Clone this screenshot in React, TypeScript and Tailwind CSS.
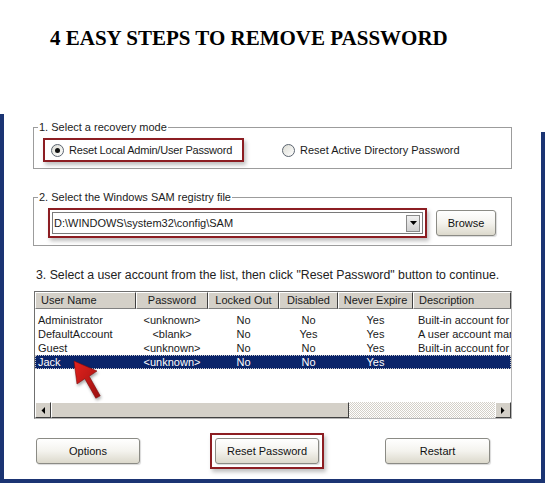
const font = { fontFamily: '"Liberation Sans", Arial, sans-serif' };

const rows = [
  { name: "Administrator", pass: "<unknown>", locked: "No", disabled: "No", never: "Yes", desc: "Built-in account for" },
  { name: "DefaultAccount", pass: "<blank>", locked: "No", disabled: "Yes", never: "Yes", desc: "A user account mar" },
  { name: "Guest", pass: "<unknown>", locked: "No", disabled: "No", never: "Yes", desc: "Built-in account for" },
  { name: "Jack", pass: "<unknown>", locked: "No", disabled: "No", never: "Yes", desc: "" },
];

function Radio({ checked }: { checked?: boolean }) {
  return (
    <span className="w-[13px] h-[13px] rounded-full border border-[#5b6470] bg-gradient-to-br from-[#dcdcd4] to-white flex items-center justify-center shrink-0">
      {checked && <span className="w-[5px] h-[5px] rounded-full bg-[#111]" />}
    </span>
  );
}

function XpButton({ label, className }: { label: string; className: string }) {
  return (
    <button className={"h-[26px] rounded-[3px] border border-[#8b8b85] bg-gradient-to-b from-white via-[#f4f3ee] to-[#dcd9cc] text-[11px] text-[#111] shadow-[1px_1px_1px_rgba(0,0,0,0.15)] " + className}>
      {label}
    </button>
  );
}

function RedBox({ children, className }: { children: React.ReactNode; className: string }) {
  return (
    <div className={"border-2 border-[#8c1d22] shadow-[2px_3px_4px_rgba(0,0,0,0.25)] " + className}>
      {children}
    </div>
  );
}

function ScrollArrow({ dir }: { dir: "left" | "right" }) {
  return (
    <div className="w-[16px] h-full bg-[#d4d0c8] border-t border-l border-t-white border-l-white border-r border-b border-r-[#404040] border-b-[#404040] flex items-center justify-center">
      <svg width="4" height="7" viewBox="0 0 4 7">
        {dir === "left" ? <polygon points="4,0 4,7 0.5,3.5" fill="#000" /> : <polygon points="0,0 0,7 3.5,3.5" fill="#000" />}
      </svg>
    </div>
  );
}

export default function App() {
  const cols = ["w-[101px]", "w-[72px]", "w-[71px]", "w-[59px]", "w-[75px]", "flex-1"];
  const heads = ["User Name", "Password", "Locked Out", "Disabled", "Never Expire", "Description"];

  return (
    <div className="w-[545px] h-[483px] bg-white relative overflow-hidden flex flex-col text-[#1a1a1a]" style={font}>
      {/* title */}
      <div className="h-[114px] shrink-0 pl-[50px] pt-[26px]">
        <h1 className="text-[21px] leading-[24px] font-bold text-black" style={{ fontFamily: '"Liberation Serif", "Times New Roman", serif' }}>
          4 EASY STEPS TO REMOVE PASSWORD
        </h1>
      </div>

      {/* window */}
      <div className="flex-1 flex flex-col">
        <div className="flex-1 flex">
          <div className="w-[4px] bg-[#1b3473]" />
          <div className="flex-1 flex flex-col text-[11px]">
            <fieldset className="mt-[7px] ml-[29px] w-[479px] border border-[#9c9c9c] px-[9px] pb-[6px]">
              <legend className="ml-[-5px] px-[1px] leading-[13px] text-[#222]">1. Select a recovery mode</legend>
              <div className="mt-[4px] flex items-center">
                <RedBox className="w-[201px] h-[24px] flex items-center gap-[5px] pl-[6px]">
                  <Radio checked />
                  <span className="tracking-[-0.2px]">Reset Local Admin/User Password</span>
                </RedBox>
                <div className="ml-[38px] flex items-center gap-[5px]">
                  <Radio />
                  <span>Reset Active Directory Password</span>
                </div>
              </div>
            </fieldset>

            <fieldset className="mt-[22px] ml-[29px] w-[479px] border border-[#9c9c9c] px-[15px] pb-[7px]">
              <legend className="ml-[-11px] px-[1px] leading-[13px] text-[#222]">2. Select the Windows SAM registry file</legend>
              <div className="mt-[4px] flex items-center">
                <RedBox className="ml-[-1px] w-[379px] h-[30px] p-[2px]">
                  <div className="h-full border border-[#7a7a7a] bg-white flex items-center pl-[1px] pr-[2px]">
                    <span className="flex-1">D:\WINDOWS\system32\config\SAM</span>
                    <div className="w-[14px] h-[17px] border border-[#8a8a8a] bg-gradient-to-b from-[#f2f2f2] to-[#d0d0d0] flex items-center justify-center">
                      <svg width="7" height="4" viewBox="0 0 7 4"><polygon points="0,0 7,0 3.5,4" fill="#000" /></svg>
                    </div>
                  </div>
                </RedBox>
                <XpButton label="Browse" className="ml-[9px] w-[60px]" />
              </div>
            </fieldset>

            <p className="mt-[22px] ml-[32px] text-[12.3px] leading-[15px] text-[#222] whitespace-nowrap">
              3. Select a user account from the list, then click "Reset Password" button to continue.
            </p>

            {/* list view */}
            <div className="mt-[8px] ml-[30px] w-[478px] h-[128px] border border-t-[#6f6f6f] border-l-[#6f6f6f] border-r-[#b5b5b5] border-b-[#b5b5b5] flex flex-col">
              <div className="h-[17px] flex bg-[#d4d0c8]">
                {heads.map((h, i) => (
                  <div
                    key={h}
                    className={
                      cols[i] +
                      " h-full border-t border-l border-t-white border-l-white border-r border-b border-r-[#404040] border-b-[#808080] flex items-center " +
                      (i === 0 || i === 5 ? "pl-[5px]" : "justify-center")
                    }
                  >
                    {h}
                  </div>
                ))}
              </div>
              <div className="flex-1 pt-[4px]">
                {rows.map((r, ri) => {
                  const sel = ri === 3;
                  const cells = [r.name, r.pass, r.locked, r.disabled, r.never, r.desc];
                  return (
                    <div
                      key={r.name}
                      className={"h-[14px] flex items-center leading-[14px] " + (sel ? "bg-[#0a246a] text-white outline-1 outline-dotted outline-offset-[-1px] outline-[#c8c8c8]" : "")}
                    >
                      {cells.map((c, i) => (
                        <div
                          key={i}
                          className={cols[i] + " whitespace-nowrap overflow-hidden " + (i === 0 ? "pl-[3px]" : i === 5 ? "pl-[5px]" : "text-center")}
                        >
                          {c}
                        </div>
                      ))}
                    </div>
                  );
                })}
              </div>
              <div className="h-[16px] flex">
                <ScrollArrow dir="left" />
                <div className="w-[298px] h-full bg-[#d4d0c8] border-t border-l border-t-white border-l-white border-r border-b border-r-[#404040] border-b-[#404040]" />
                <div className="flex-1 h-full bg-[repeating-conic-gradient(#d4d0c8_0_25%,#ffffff_0_50%)] bg-[length:2px_2px]" />
                <ScrollArrow dir="right" />
              </div>
            </div>

            {/* buttons */}
            <div className="mt-[14px] flex items-center">
              <XpButton label="Options" className="ml-[32px] w-[104px]" />
              <RedBox className="ml-[70px] w-[114px] h-[36px] flex items-center justify-center">
                <XpButton label="Reset Password" className="w-[104px]" />
              </RedBox>
              <XpButton label="Restart" className="ml-[61px] w-[105px]" />
            </div>
          </div>
          <div className="w-[4px] flex flex-col">
            <div className="mt-[18px] flex-1 bg-[#1b3473]" />
          </div>
        </div>
        <div className="h-[4px] bg-[#1b3473]" />
      </div>

      {/* red arrow pointing at Jack */}
      <svg className="absolute left-[60px] top-[351px]" width="50" height="52" viewBox="0 0 50 52">
        <defs>
          <linearGradient id="ag" x1="0" y1="0" x2="1" y2="1">
            <stop offset="0" stopColor="#e3221d" />
            <stop offset="1" stopColor="#9c1010" />
          </linearGradient>
        </defs>
        <polygon
          points="14,10 37,20 29.2,25.3 40.2,44.8 35.8,47.2 24.8,27.7 17,33"
          fill="url(#ag)"
          stroke="#7d0c0c"
          strokeWidth="0.6"
          style={{ filter: "drop-shadow(1px 2px 1.5px rgba(0,0,0,0.35))" }}
        />
      </svg>
    </div>
  );
}
